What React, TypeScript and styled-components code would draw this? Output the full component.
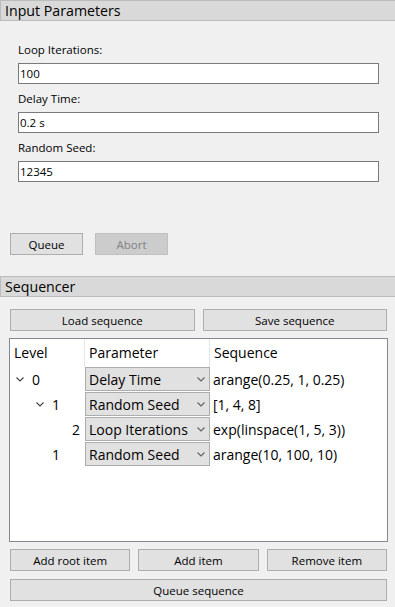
import styled, { createGlobalStyle } from 'styled-components';

const GlobalStyle = createGlobalStyle`
  body {
    margin: 0;
    background: #f0f0f0;
    font-family: "Open Sans", "Noto Sans", sans-serif;
    color: #000;
  }
`;

const Page = styled.div`
  width: 395px;
  height: 607px;
  overflow: hidden;
  display: flex;
  flex-direction: column;
`;

const SectionHeader = styled.div`
  height: 19px;
  border-top: 1px solid #bcbcbc;
  border-bottom: 1px solid #bcbcbc;
  border-left: 1px solid #bcbcbc;
  background: #d9d9d9;
  padding-left: 4px;
  font-size: 14.2px;
  line-height: 20px;
`;

const ParamsBody = styled.div`
  padding: 21px 16px 21px 10px;
`;

const Fields = styled.div`
  display: flex;
  flex-direction: column;
  gap: 7px;
  padding-left: 8px;
`;

const Field = styled.div`
  display: flex;
  flex-direction: column;
`;

const Label = styled.label`
  font-size: 11.5px;
  line-height: 16px;
  margin-bottom: 5px;
`;

const TextInput = styled.input`
  box-sizing: border-box;
  height: 21px;
  margin: 0;
  border: 1px solid #7a7a7a;
  background: #fff;
  padding: 0 1px;
  font-family: inherit;
  font-size: 11.5px;
  outline: none;
`;

const ButtonRow = styled.div<{ $top: number; $fill?: boolean }>`
  display: flex;
  gap: ${p => (p.$fill ? 8 : 12)}px;
  margin-top: ${p => p.$top}px;
  padding: 0 ${p => (p.$fill ? 1 : 0)}px;
`;

const Button = styled.button<{ $width?: number }>`
  box-sizing: border-box;
  height: 22px;
  margin: 0;
  ${p => (p.$width ? `width: ${p.$width}px;` : 'flex: 1;')}
  border: 1px solid #adadad;
  background: #e1e1e1;
  font-family: inherit;
  font-size: 11.5px;
  color: #000;
  padding: 0;
  &:disabled {
    background: #cccccc;
    border-color: #bfbfbf;
    color: #838383;
  }
`;

const SeqBody = styled.div`
  padding: 12px 7px 0 9px;
`;

const Tree = styled.div`
  box-sizing: border-box;
  height: 204px;
  margin-top: 7px;
  border: 1px solid #828790;
  background: #fff;
  font-size: 14px;
`;

const TreeRow = styled.div<{ $header?: boolean }>`
  display: grid;
  grid-template-columns: 75px 125px 1fr;
  height: ${p => (p.$header ? 28 : 25)}px;
`;

const HeadCell = styled.div<{ $last?: boolean }>`
  box-sizing: border-box;
  padding-left: 4px;
  line-height: 28px;
  border-right: ${p => (p.$last ? 'none' : '1px solid #e5e5e5')};
`;

const LevelCell = styled.div<{ $depth: number }>`
  display: flex;
  align-items: center;
  padding-left: ${p => 4 + p.$depth * 20}px;
  height: 24px;
`;

const Expander = styled.span`
  width: 18px;
  display: flex;
  align-items: center;
  padding-left: 2px;
  box-sizing: border-box;
`;

const Combo = styled.div`
  box-sizing: border-box;
  height: 24px;
  border: 1px solid #adadad;
  background: #e1e1e1;
  display: flex;
  align-items: center;
  justify-content: space-between;
  padding: 0 4px 0 3px;
`;

const SeqCell = styled.div`
  display: flex;
  align-items: center;
  height: 24px;
  padding-left: 3px;
  white-space: nowrap;
`;

const Chevron = ({ color = '#404040' }: { color?: string }) => (
  <svg width="8" height="5" viewBox="0 0 8 5">
    <polyline points="0.5,0.5 4,4 7.5,0.5" fill="none" stroke={color} strokeWidth="1.1" />
  </svg>
);

type Item = { depth: number; open: boolean; param: string; seq: string; level: number };

const items: Item[] = [
  { depth: 0, open: true, level: 0, param: 'Delay Time', seq: 'arange(0.25, 1, 0.25)' },
  { depth: 1, open: true, level: 1, param: 'Random Seed', seq: '[1, 4, 8]' },
  { depth: 2, open: false, level: 2, param: 'Loop Iterations', seq: 'exp(linspace(1, 5, 3))' },
  { depth: 1, open: false, level: 1, param: 'Random Seed', seq: 'arange(10, 100, 10)' },
];

const App = () => {
  return (
    <Page>
      <GlobalStyle />
      <SectionHeader>Input Parameters</SectionHeader>
      <ParamsBody>
        <Fields>
          <Field>
            <Label>Loop Iterations:</Label>
            <TextInput defaultValue="100" />
          </Field>
          <Field>
            <Label>Delay Time:</Label>
            <TextInput defaultValue="0.2 s" />
          </Field>
          <Field>
            <Label>Random Seed:</Label>
            <TextInput defaultValue="12345" />
          </Field>
        </Fields>
        <ButtonRow $top={51}>
          <Button $width={73}>Queue</Button>
          <Button $width={73} disabled>Abort</Button>
        </ButtonRow>
      </ParamsBody>
      <SectionHeader>Sequencer</SectionHeader>
      <SeqBody>
        <ButtonRow $top={0} $fill>
          <Button>Load sequence</Button>
          <Button>Save sequence</Button>
        </ButtonRow>
        <Tree>
          <TreeRow $header>
            <HeadCell>Level</HeadCell>
            <HeadCell>Parameter</HeadCell>
            <HeadCell $last>Sequence</HeadCell>
          </TreeRow>
          {items.map((it, i) => (
            <TreeRow key={i}>
              <LevelCell $depth={it.depth}>
                <Expander>{it.open && <Chevron />}</Expander>
                {it.level}
              </LevelCell>
              <Combo>
                <span>{it.param}</span>
                <Chevron color="#606060" />
              </Combo>
              <SeqCell>{it.seq}</SeqCell>
            </TreeRow>
          ))}
        </Tree>
        <ButtonRow $top={7} $fill>
          <Button>Add root item</Button>
          <Button>Add item</Button>
          <Button>Remove item</Button>
        </ButtonRow>
        <ButtonRow $top={8} $fill>
          <Button>Queue sequence</Button>
        </ButtonRow>
      </SeqBody>
    </Page>
  );
};

export default App;
